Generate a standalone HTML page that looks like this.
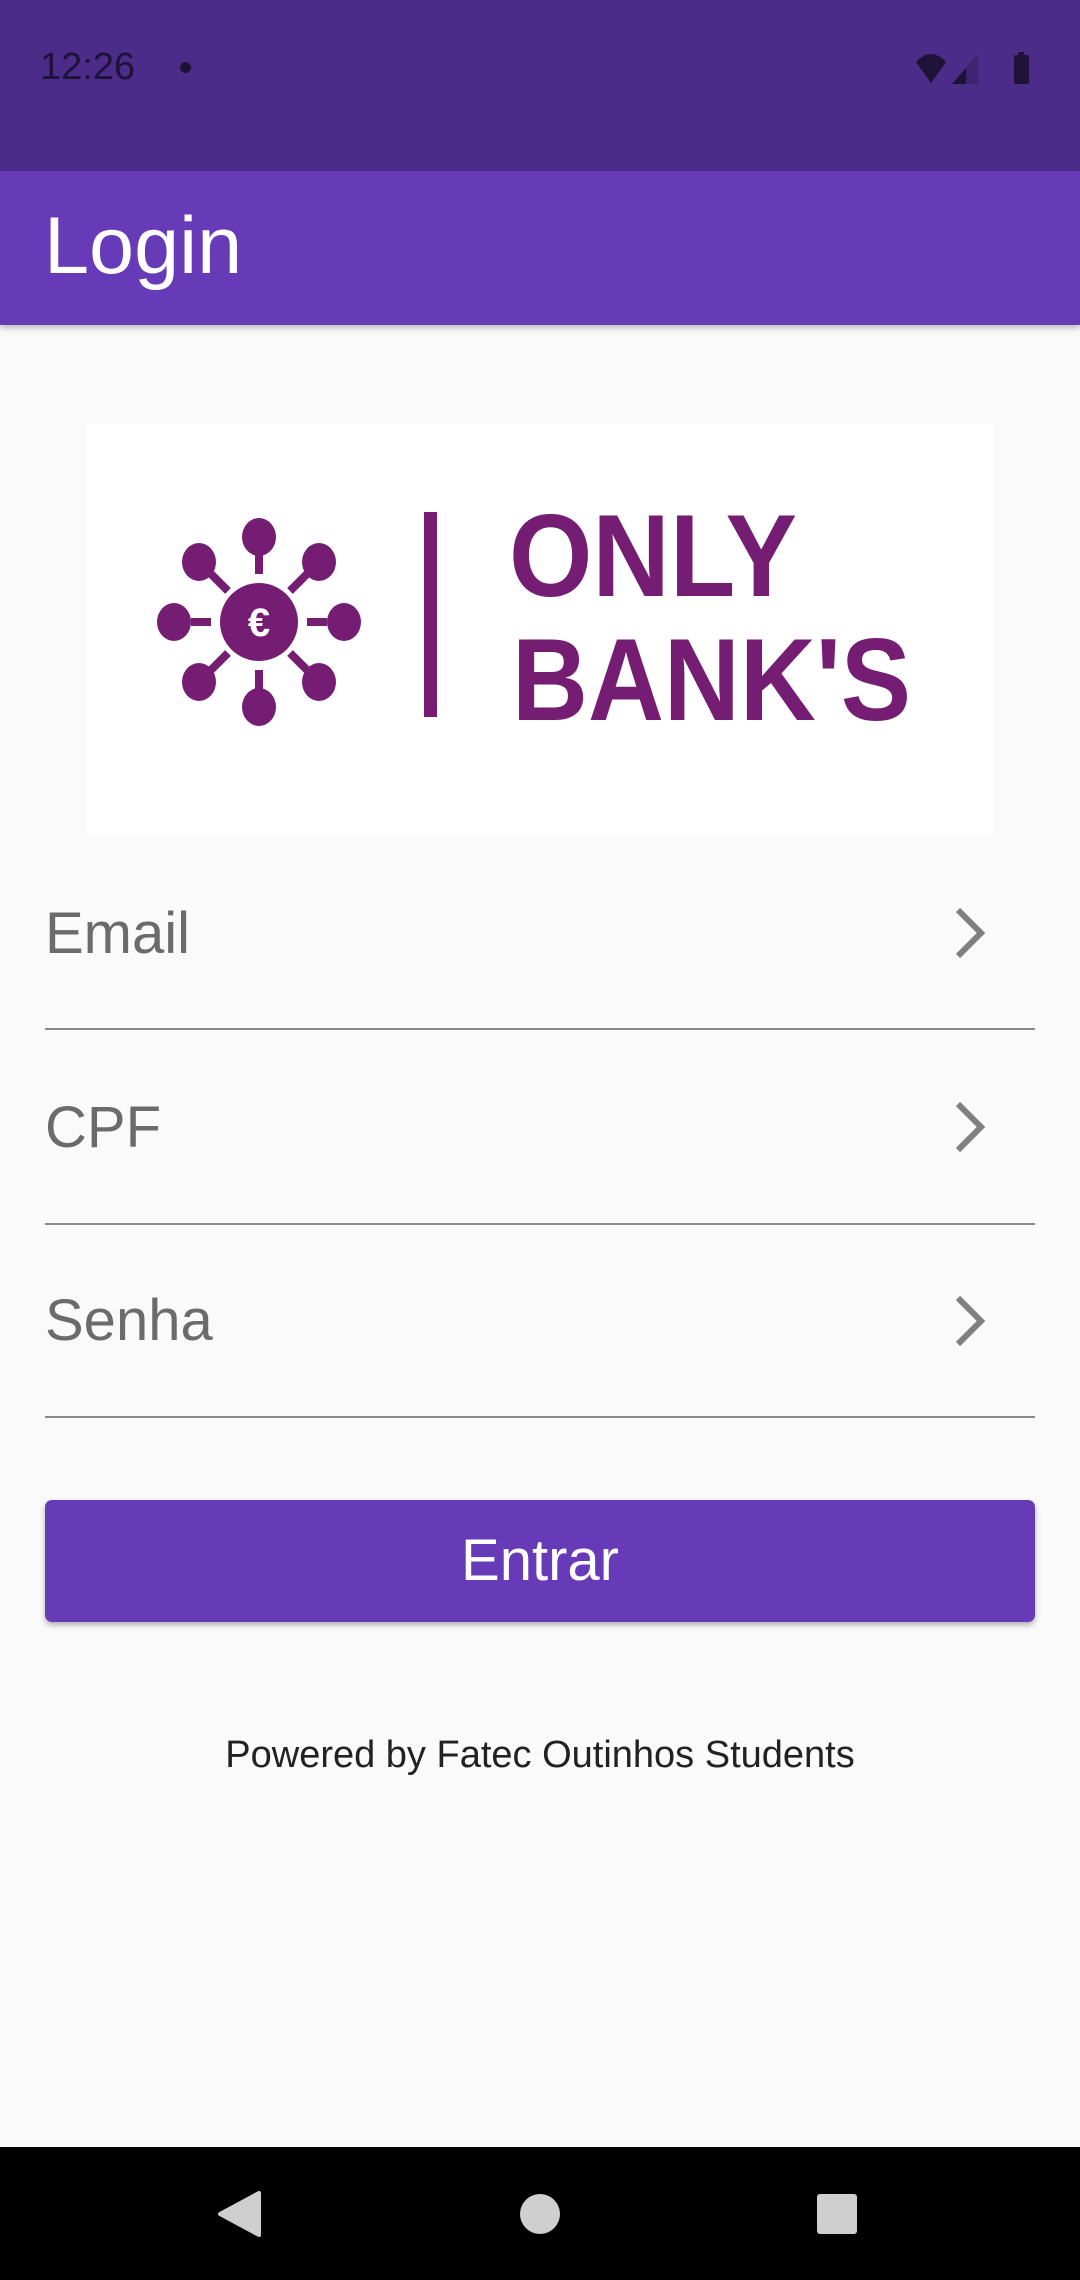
<!DOCTYPE html>
<html><head><meta charset="utf-8"><style>
*{margin:0;padding:0;box-sizing:border-box}
body{width:1080px;height:2280px;background:#fafafa;position:relative;overflow:hidden;font-family:"Liberation Sans",sans-serif}
.abs{position:absolute}
.field{position:absolute;left:45px;width:990px;border-bottom:2px solid #8a8a8a}
.field span{position:absolute;left:0;font-size:58px;color:#6b6b6b;font-weight:300}
</style></head><body>
<div class="abs" style="left:0;top:0;width:1080px;height:171px;background:#4b2c89"></div>
<div class="abs" style="left:40px;top:46px;font-size:38px;color:#1e1238">12:26</div>
<div class="abs" style="left:180px;top:62px;width:11px;height:11px;border-radius:50%;background:#1e1238"></div>
<svg class="abs" style="left:910px;top:48px" width="130" height="38" viewBox="0 0 130 38">
<path d="M6 14 Q21 -2 36 14 L21 35 Z" fill="#1e1238"/>
<path d="M42 36 L68 6 L68 36 Z" fill="#3d2470"/>
<path d="M42 36 L56 20 L56 36 Z" fill="#1e1238"/>
<rect x="108" y="4" width="6" height="4" fill="#1e1238"/>
<rect x="104" y="7" width="15" height="29" rx="2" fill="#1e1238"/>
</svg>
<div class="abs" style="left:0;top:171px;width:1080px;height:154px;background:#673ab7;box-shadow:0 3px 6px rgba(0,0,0,.25)"></div>
<div class="abs" style="left:44px;top:206px;font-size:81px;color:#fff;line-height:1;font-weight:300">Login</div>

<div class="abs" style="left:86px;top:424px;width:908px;height:412px;background:#fff"></div>
<svg class="abs" style="left:86px;top:424px" width="908" height="412" viewBox="0 0 908 412">
<g fill="#751c73" stroke="#751c73">
<circle cx="173" cy="198" r="39" stroke="none"/>
<g stroke-width="8">
<line x1="173" y1="130" x2="173" y2="150"/><line x1="173" y1="246" x2="173" y2="266"/>
<line x1="105" y1="198" x2="125" y2="198"/><line x1="221" y1="198" x2="241" y2="198"/>
<line x1="125" y1="150" x2="142" y2="167"/><line x1="221" y1="150" x2="204" y2="167"/>
<line x1="125" y1="246" x2="142" y2="229"/><line x1="221" y1="246" x2="204" y2="229"/>
</g>
<g stroke="none">
<ellipse cx="173" cy="113" rx="17" ry="19"/><ellipse cx="173" cy="283" rx="17" ry="19"/>
<ellipse cx="88" cy="198" rx="17" ry="19"/><ellipse cx="258" cy="198" rx="17" ry="19"/>
<ellipse cx="113" cy="138" rx="17" ry="19"/><ellipse cx="233" cy="138" rx="17" ry="19"/>
<ellipse cx="113" cy="258" rx="17" ry="19"/><ellipse cx="233" cy="258" rx="17" ry="19"/>
</g>
</g>
<text x="173" y="212" text-anchor="middle" font-family="Liberation Sans" font-weight="bold" font-size="40" fill="#fff">€</text>
<rect x="338" y="88" width="13" height="205" fill="#751c73"/>
<text x="423" y="172" font-family="Liberation Sans" font-weight="bold" font-size="117" fill="#751c73" textLength="288" lengthAdjust="spacingAndGlyphs">ONLY</text>
<text x="426" y="296" font-family="Liberation Sans" font-weight="bold" font-size="117" fill="#751c73" textLength="399" lengthAdjust="spacingAndGlyphs">BANK'S</text>
</svg>

<div class="field" style="top:880px;height:150px"><span style="top:20px">Email</span></div>
<div class="field" style="top:1075px;height:150px"><span style="top:19px">CPF</span></div>
<div class="field" style="top:1268px;height:150px"><span style="top:19px">Senha</span></div>
<svg class="abs" style="left:950px;top:905px" width="45" height="520" viewBox="0 0 45 520">
<g fill="none" stroke="#808080" stroke-width="6">
<path d="M8 5 L31 28 L8 51"/>
<path d="M8 199 L31 222 L8 245"/>
<path d="M8 393 L31 416 L8 439"/>
</g>
</svg>

<div class="abs" style="left:45px;top:1500px;width:990px;height:122px;background:#673ab7;border-radius:7px;box-shadow:0 3px 6px rgba(0,0,0,.3);color:#fff;font-size:58px;text-align:center;line-height:122px;font-weight:300">Entrar</div>
<div class="abs" style="left:0;top:1734px;width:1080px;text-align:center;font-size:38px;color:#222">Powered by Fatec Outinhos Students</div>

<div class="abs" style="left:0;top:2147px;width:1080px;height:133px;background:#000"></div>
<svg class="abs" style="left:0;top:2147px" width="1080" height="133" viewBox="0 0 1080 133">
<path d="M220 67 L259 46 L259 88 Z" fill="#cfcfcf" stroke="#cfcfcf" stroke-width="4" stroke-linejoin="round"/>
<circle cx="540" cy="67" r="20" fill="#cfcfcf"/>
<rect x="817" y="47" width="40" height="40" rx="3" fill="#cfcfcf"/>
</svg>
</body></html>
